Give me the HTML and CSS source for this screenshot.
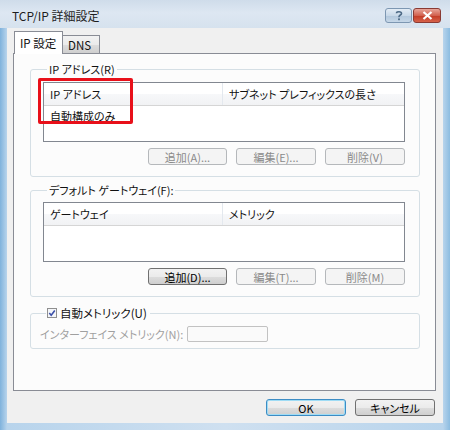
FILE: index.html
```html
<!DOCTYPE html>
<html lang="ja">
<head>
<meta charset="utf-8">
<title>TCP/IP 詳細設定</title>
<link rel="stylesheet" href="styles.css">
</head>
<body>
<div class="window">
  <div class="titlebar">
    <span class="title">TCP/IP 詳細設定</span>
    <div class="caption-btns">
      <span class="cap help">
        <svg width="10" height="11" viewBox="0 0 10 11"><path d="M2.5 3.2 C2.5 1.2 7.5 1.2 7.5 3.4 C7.5 5 5 5 5 6.8 L5 7.3" fill="none" stroke="#4d6a86" stroke-width="1.6"/><rect x="4.1" y="8.4" width="1.8" height="1.8" fill="#4d6a86"/></svg>
      </span>
      <span class="cap close">
        <svg width="11" height="9" viewBox="0 0 11 9"><path d="M1.5 1 L9.5 8 M9.5 1 L1.5 8" stroke="#fff" stroke-width="2.2"/></svg>
      </span>
    </div>
  </div>
  <div class="client">
    <div class="tabs">
      <div class="tab active">IP 設定</div>
      <div class="tab">DNS</div>
    </div>
    <div class="panel">
      <fieldset class="group g1">
        <legend>IP アドレス(R)</legend>
        <div class="list">
          <div class="list-head">
            <span class="col c1">IP アドレス</span>
            <span class="col c2">サブネット プレフィックスの長さ</span>
          </div>
          <div class="list-row">自動構成のみ</div>
          <div class="highlight"></div>
        </div>
        <div class="btn-row">
          <span class="btn disabled w79">追加(A)...</span>
          <span class="btn disabled">編集(E)...</span>
          <span class="btn disabled">削除(V)</span>
        </div>
      </fieldset>
      <fieldset class="group g2">
        <legend>デフォルト ゲートウェイ(F):</legend>
        <div class="list">
          <div class="list-head">
            <span class="col c1">ゲートウェイ</span>
            <span class="col c2">メトリック</span>
          </div>
        </div>
        <div class="btn-row">
          <span class="btn w79">追加(D)...</span>
          <span class="btn disabled">編集(T)...</span>
          <span class="btn disabled">削除(M)</span>
        </div>
      </fieldset>
      <fieldset class="group g3">
        <legend class="check-legend">
          <span class="checkbox">
            <svg width="10" height="10" viewBox="0 0 10 10"><rect x="0.5" y="0.5" width="9" height="9" fill="#f4f6f9" stroke="#8f8f8f"/><path d="M2.3 5 L4.2 7.2 L7.8 2.5" fill="none" stroke="#3b4fa8" stroke-width="1.6"/></svg>
          </span>
          <span>自動メトリック(U)</span>
        </legend>
        <div class="metric-row">
          <span class="metric-label">インターフェイス メトリック(N):</span>
          <span class="textbox"></span>
        </div>
      </fieldset>
    </div>
    <div class="footer">
      <span class="btn default">OK</span>
      <span class="btn">キャンセル</span>
    </div>
  </div>
</div>
</body>
</html>
```

FILE: styles.css
```css
html, body {
  margin: 0;
  padding: 0;
  background: #ffffff;
}

body {
  font-family: "Noto Sans CJK JP", "Noto Sans", sans-serif;
  font-size: 11px;
  font-feature-settings: "palt";
  color: #111;
}

.window {
  width: 450px;
  height: 430px;
  box-sizing: border-box;
  background: linear-gradient(to right, #7fb2dc 0px, #b8d4ec 7px, #cfe0f0 50%, #b8d4ec calc(100% - 7px), #8cbce0 100%);
  display: flex;
  flex-direction: column;
}

.titlebar {
  height: 28px;
  display: flex;
  align-items: center;
  justify-content: space-between;
  padding: 0 9px 0 12px;
  background: linear-gradient(to bottom, #cfdcea 0%, #dde7f2 45%, #d6e2ee 100%);
}

.title {
  font-size: 12px;
  color: #1e1e1e;
  margin-top: 2px;
}

.caption-btns {
  display: flex;
  gap: 1px;
  margin-top: 2px;
}

.cap {
  width: 27px;
  height: 15px;
  box-sizing: border-box;
  border-radius: 3px;
  display: flex;
  align-items: center;
  justify-content: center;
}

.help {
  border: 1px solid #7d97b2;
  background: linear-gradient(to bottom, #e3ecf5 0%, #c9d9e9 50%, #b2c7dc 51%, #c6d7e8 100%);
}

.close {
  width: 28px;
  border: 1px solid #8a3a33;
  background: linear-gradient(to bottom, #e8a59a 0%, #d2614f 50%, #c23a25 51%, #d6624a 100%);
}

.client {
  flex: 1;
  margin: 0 7px 7px 7px;
  background: #f0f0f0;
  padding: 3px 7px 0 6px;
  display: flex;
  flex-direction: column;
}

.tabs {
  display: flex;
  align-items: flex-end;
  height: 22px;
  position: relative;
  z-index: 1;
  margin-left: 1px;
}

.tab {
  height: 18px;
  box-sizing: border-box;
  padding: 0 5px;
  border: 1px solid #898c95;
  border-bottom: none;
  background: linear-gradient(to bottom, #f2f2f2 0%, #ebebeb 50%, #dddddd 51%, #cfcfcf 100%);
  display: flex;
  align-items: center;
  font-size: 11.5px;
  white-space: nowrap;
}

.tab.active {
  height: 23px;
  margin-bottom: -1px;
  background: #fff;
  width: 49px;
  padding-left: 5px;
  padding-right: 0;
}

.tab + .tab {
  border-left: none;
  width: 37px;
}

.panel {
  height: 338px;
  box-sizing: border-box;
  border: 1px solid #898c95;
  background: #fcfcfc;
  padding: 8px 15px 0 16px;
  display: flex;
  flex-direction: column;
}

.group {
  margin: 0;
  border: 1px solid #d5dfe5;
  border-radius: 3px;
  padding: 6px 14px 11px 12px;
  min-width: 0;
}

.group legend {
  padding: 0 2px;
  margin-left: 4px;
  line-height: 14px;
  font-size: 11px;
}

.g2 {
  margin-top: 6px;
  padding-top: 5px;
  padding-bottom: 11px;
}

.g3 {
  margin-top: 9px;
  padding: 6px 14px 6px 9px;
}

.list {
  position: relative;
  height: 60px;
  box-sizing: border-box;
  border: 1px solid #828790;
  background: #fff;
}

.list-head {
  height: 23px;
  box-sizing: border-box;
  border-bottom: 1px solid #d5d5d5;
  background: linear-gradient(to bottom, #ffffff 0%, #ffffff 50%, #f7f8fa 51%, #f1f2f4 100%);
  display: flex;
  align-items: center;
}

.col {
  height: 100%;
  display: flex;
  align-items: center;
  padding-left: 6px;
  box-sizing: border-box;
}

.c1 {
  width: 179px;
  border-right: 1px solid #e3e8ee;
}

.list-row {
  height: 19px;
  display: flex;
  align-items: center;
  padding-left: 6px;
}

.highlight {
  position: absolute;
  left: -6px;
  top: -5px;
  width: 95px;
  height: 46px;
  box-sizing: border-box;
  border: 3px solid #e8101a;
  border-radius: 2px;
}

.btn-row {
  display: flex;
  justify-content: flex-end;
  gap: 9px;
  margin-top: 6px;
}

.btn {
  width: 80px;
  height: 17px;
  box-sizing: border-box;
  border: 1px solid #707070;
  border-radius: 3px;
  background: linear-gradient(to bottom, #f2f2f2 0%, #ebebeb 50%, #dddddd 51%, #cfcfcf 100%);
  display: flex;
  align-items: center;
  justify-content: center;
  font-size: 11px;
  color: #000;
}

.btn.w79 {
  width: 79px;
}

.btn.disabled {
  border-color: #b5b8bb;
  background: #f4f4f4;
  color: #8a8a8a;
}

.btn.default {
  border-color: #3c8cc4;
  box-shadow: inset 0 0 0 1px #9fdcf5;
}

.check-legend {
  display: flex;
  align-items: center;
  gap: 3px;
  margin-left: 6px !important;
  padding: 0 3px 0 1px !important;
  font-size: 11.5px !important;
}

.checkbox {
  display: flex;
  width: 10px;
  height: 10px;
}

.metric-row {
  display: flex;
  align-items: center;
  justify-content: space-between;
  width: 228px;
}

.metric-label {
  color: #a0a0a0;
}

.textbox {
  width: 81px;
  height: 16px;
  box-sizing: border-box;
  border: 1px solid #c2c2c2;
  border-radius: 2px;
  background: #fafafa;
}

.footer {
  display: flex;
  justify-content: flex-end;
  gap: 9px;
  margin-top: 8px;
  margin-right: 1px;
}

.footer .btn {
  width: 80px;
  height: 17px;
}
```
